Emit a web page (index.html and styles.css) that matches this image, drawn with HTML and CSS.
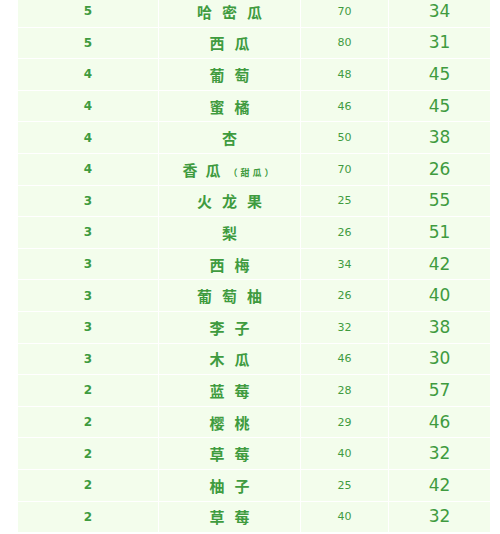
FILE: index.html
```html
<!DOCTYPE html>
<html>
<head>
<meta charset="utf-8">
<link rel="stylesheet" href="styles.css">
</head>
<body>
<div class="wrap">
<table class="fruit">
<tbody>
<tr><td class="c1">5</td><td class="c2">哈密瓜</td><td class="c3">70</td><td class="c4">34</td></tr>
<tr><td class="c1">5</td><td class="c2">西瓜</td><td class="c3">80</td><td class="c4">31</td></tr>
<tr><td class="c1">4</td><td class="c2">葡萄</td><td class="c3">48</td><td class="c4">45</td></tr>
<tr><td class="c1">4</td><td class="c2">蜜橘</td><td class="c3">46</td><td class="c4">45</td></tr>
<tr><td class="c1">4</td><td class="c2">杏</td><td class="c3">50</td><td class="c4">38</td></tr>
<tr><td class="c1">4</td><td class="c2 tight">香瓜<span class="note">（甜瓜）</span></td><td class="c3">70</td><td class="c4">26</td></tr>
<tr><td class="c1">3</td><td class="c2">火龙果</td><td class="c3">25</td><td class="c4">55</td></tr>
<tr><td class="c1">3</td><td class="c2">梨</td><td class="c3">26</td><td class="c4">51</td></tr>
<tr><td class="c1">3</td><td class="c2">西梅</td><td class="c3">34</td><td class="c4">42</td></tr>
<tr><td class="c1">3</td><td class="c2">葡萄柚</td><td class="c3">26</td><td class="c4">40</td></tr>
<tr><td class="c1">3</td><td class="c2">李子</td><td class="c3">32</td><td class="c4">38</td></tr>
<tr><td class="c1">3</td><td class="c2">木瓜</td><td class="c3">46</td><td class="c4">30</td></tr>
<tr><td class="c1">2</td><td class="c2">蓝莓</td><td class="c3">28</td><td class="c4">57</td></tr>
<tr><td class="c1">2</td><td class="c2">樱桃</td><td class="c3">29</td><td class="c4">46</td></tr>
<tr><td class="c1">2</td><td class="c2">草莓</td><td class="c3">40</td><td class="c4">32</td></tr>
<tr><td class="c1">2</td><td class="c2">柚子</td><td class="c3">25</td><td class="c4">42</td></tr>
<tr><td class="c1">2</td><td class="c2">草莓</td><td class="c3">40</td><td class="c4">32</td></tr>
</tbody>
</table>
</div>
</body>
</html>
```
FILE: styles.css
```css
html, body {
  margin: 0;
  padding: 0;
  background: #ffffff;
  overflow: hidden;
}
.wrap {
  padding-left: 17px;
  margin-top: -5px;
}
.fruit {
  border-collapse: collapse;
  table-layout: fixed;
  width: 474px;
  color: #3f9b3f;
  font-family: "DejaVu Sans", Verdana, "Noto Sans CJK SC", sans-serif;
}
.fruit td {
  background: #f3fdec;
  border: 1px solid #ffffff;
  height: 30.6px;
  padding: 0;
  text-align: center;
  vertical-align: middle;
  line-height: 1;
}
.c1 {
  width: 140px;
  font-size: 12px;
  font-weight: bold;
}
.c2 {
  width: 141px;
  font-family: "Noto Sans CJK SC", sans-serif;
  font-size: 15px;
  font-weight: bold;
  letter-spacing: 10px;
  text-indent: 10px;
}
.c2.tight {
  letter-spacing: 8px;
  text-indent: 0;
}
.c3 {
  width: 87px;
  font-size: 11px;
}
.c4 {
  font-size: 17px;
}
.note {
  font-size: 9px;
  letter-spacing: 3px;
}
```
